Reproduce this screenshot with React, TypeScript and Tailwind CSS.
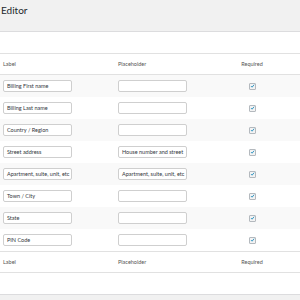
const fields = [
    { label: "Billing First name", placeholder: "" },
    { label: "Billing Last name", placeholder: "" },
    { label: "Country / Region", placeholder: "" },
    { label: "Street address", placeholder: "House number and street" },
    { label: "Apartment, suite, unit, etc", placeholder: "Apartment, suite, unit, etc" },
    { label: "Town / City", placeholder: "" },
    { label: "State", placeholder: "" },
    { label: "PIN Code", placeholder: "" },
]

function Check() {
    return (
        <span className="flex items-center justify-center w-[7px] h-[7px] rounded-[1px] border border-[#b4b9be] bg-[#f3f3f3]">
            <svg viewBox="0 0 10 10" className="w-[6px] h-[6px]">
                <path d="M2 5.2 L4.2 7.4 L8.2 2.4" fill="none" stroke="#1e8cbe" strokeWidth="1.8" />
            </svg>
        </span>
    )
}

function HeadRow() {
    return (
        <div className="grid grid-cols-[118px_86px_96px] h-[22px] items-center border-y border-[#e1e1e1] text-[5.5px] text-[#555]">
            <span className="pl-[3px]">Label</span>
            <span>Placeholder</span>
            <span className="text-center">Required</span>
        </div>
    )
}

function App() {
    return (
        <div className="w-[300px] h-[300px] bg-[#f1f1f1] font-['Lato',sans-serif] overflow-hidden">
            <div className="h-[31px] flex items-start pt-[3px]">
                <h1 className="text-[10px] text-[#23282d] pl-[1px]">Editor</h1>
            </div>
            <div className="bg-white border-y border-[#dcdcde] h-[264px] flex flex-col">
                <div className="h-[21px]" />
                <HeadRow />
                {fields.map(({ label, placeholder }, i) => (
                    <div
                        key={label}
                        className={`grid grid-cols-[118px_86px_96px] h-[22px] items-center ${i % 2 === 0 ? 'bg-[#f9f9f9]' : 'bg-white'}`}
                    >
                        <div className="pl-[3px]">
                            <div className="w-[69px] h-[12px] bg-white border border-[#cfcfcf] rounded-[2px] px-[3px] text-[5.5px] leading-[10px] text-[#32373c] whitespace-nowrap overflow-hidden">
                                {label}
                            </div>
                        </div>
                        <div>
                            <div className="w-[69px] h-[12px] bg-white border border-[#cfcfcf] rounded-[2px] px-[3px] text-[5.5px] leading-[10px] text-[#32373c] whitespace-nowrap overflow-hidden">
                                {placeholder}
                            </div>
                        </div>
                        <div className="flex justify-center">
                            <Check />
                        </div>
                    </div>
                ))}
                <HeadRow />
            </div>
        </div>
    )
}

export default App
